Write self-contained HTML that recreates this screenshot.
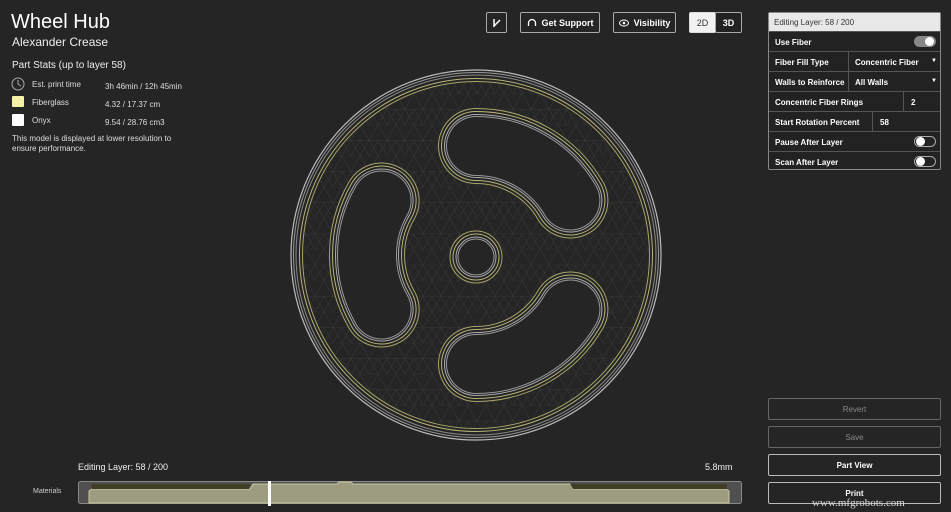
<!DOCTYPE html>
<html><head><meta charset="utf-8"><style>
*{margin:0;padding:0;box-sizing:border-box}
body{width:951px;height:512px;background:#252525;font-family:"Liberation Sans",sans-serif;color:#eee;position:relative;overflow:hidden}
.a{position:absolute}
.t{font-size:8px;color:#ddd}
.btn{position:absolute;border:1px solid #aaa;border-radius:2px;font-size:9px;color:#fff;display:flex;align-items:center;justify-content:center;font-weight:bold}
.panel{position:absolute;left:768px;top:12px;width:173px;height:158px;border:1px solid #888;border-radius:2px;background:#222}
.row{position:absolute;left:0;width:171px;height:20px;border-top:1px solid #555;font-size:8px;color:#fff;font-weight:bold}
.row span{position:absolute;top:6px}
.sep{position:absolute;top:0;width:1px;height:19px;background:#555}
.tog{position:absolute;right:4px;top:4px;width:22px;height:11px;border-radius:6px;border:1px solid #aaa}
.tog i{position:absolute;top:0;width:9px;height:9px;border-radius:50%;background:#fff}
.rb{position:absolute;left:768px;width:173px;height:22px;border:1px solid #777;border-radius:2px;font-size:8px;display:flex;align-items:center;justify-content:center}
</style></head><body>
<div class="a" style="left:11px;top:11px;font-size:20px;color:#fff">Wheel Hub</div>
<div class="a" style="left:12px;top:35px;font-size:12px;color:#eee">Alexander Crease</div>
<div class="a" style="left:12px;top:60px;font-size:10px;color:#eee">Part Stats (up to layer 58)</div>
<svg class="a" style="left:11px;top:77px" width="14" height="14"><circle cx="7" cy="7" r="6" fill="none" stroke="#aaa" stroke-width="1"/><path d="M7 3V7L10 9" fill="none" stroke="#aaa"/></svg>
<div class="a t" style="left:32px;top:80px">Est. print time</div><div class="a t" style="left:105px;top:82px">3h 46min / 12h 45min</div>
<div class="a" style="left:12px;top:96px;width:12px;height:11px;background:#f6f2a6;border-radius:1px"></div>
<div class="a t" style="left:32px;top:98px">Fiberglass</div><div class="a t" style="left:105px;top:100px">4.32 / 17.37 cm</div>
<div class="a" style="left:12px;top:114px;width:12px;height:12px;background:#fff;border-radius:1px"></div>
<div class="a t" style="left:32px;top:116px">Onyx</div><div class="a t" style="left:105px;top:118px">9.54 / 28.76 cm3</div>
<div class="a t" style="left:12px;top:134px;line-height:10px">This model is displayed at lower resolution to<br>ensure performance.</div>

<div class="btn" style="left:486px;top:12px;width:21px;height:21px"><svg width="10" height="10"><path d="M2 1V9M2 8L8 2" stroke="#fff" stroke-width="1.5" fill="none"/></svg></div>
<div class="btn" style="left:520px;top:12px;width:80px;height:21px"><svg width="10" height="10" style="margin-right:5px"><path d="M1.5 8V5A3.5 3.5 0 0 1 8.5 5V8" stroke="#fff" stroke-width="1.3" fill="none"/></svg>Get Support</div>
<div class="btn" style="left:613px;top:12px;width:63px;height:21px"><svg width="10" height="8" style="margin-right:5px"><ellipse cx="5" cy="4" rx="4.5" ry="3" fill="none" stroke="#fff"/><circle cx="5" cy="4" r="1.3" fill="#fff"/></svg>Visibility</div>
<div class="btn" style="left:689px;top:12px;width:27px;height:21px;background:#f2f2f2;color:#333;font-weight:normal;border-color:#ddd">2D</div>
<div class="btn" style="left:715px;top:12px;width:27px;height:21px;background:#222">3D</div>

<svg class="a" style="left:0;top:0" width="951" height="512">
<defs>
<pattern id="h" width="18" height="31.18" patternUnits="userSpaceOnUse">
<path d="M0 0H18M0 15.59H18M0 0L18 31.18M18 0L0 31.18M9 15.59L18 0M9 15.59L0 0M0 15.59L9 31.18M18 15.59L9 31.18" stroke="#363636" stroke-width="0.6" fill="none"/>
</pattern>
<g id="arc1"><path d="M381.6 200.5A109 109 0 0 0 381.6 309.5"/></g>
</defs>
<circle cx="476" cy="255" r="185" fill="none" stroke="#bbb" stroke-width="1.2"/>
<circle cx="476" cy="255" r="182.5" fill="none" stroke="#999" stroke-width="1"/>
<circle cx="476" cy="255" r="180" fill="none" stroke="#888" stroke-width="1"/>
<circle cx="476" cy="255" r="176.5" fill="none" stroke="#b9b47a" stroke-width="1"/>
<circle cx="476" cy="255" r="173.5" fill="url(#h)" stroke="#a9a46a" stroke-width="1"/>
<g fill="none" stroke-linecap="round">
<g id="s">
<path d="M381.6 200.5A109 109 0 0 0 381.6 309.5" stroke="#a9a46a" stroke-width="76"/>
<path d="M381.6 200.5A109 109 0 0 0 381.6 309.5" stroke="#252525" stroke-width="74"/>
<path d="M381.6 200.5A109 109 0 0 0 381.6 309.5" stroke="#b9b47a" stroke-width="70"/>
<path d="M381.6 200.5A109 109 0 0 0 381.6 309.5" stroke="#252525" stroke-width="68"/>
<path d="M381.6 200.5A109 109 0 0 0 381.6 309.5" stroke="#aaa" stroke-width="64"/>
<path d="M381.6 200.5A109 109 0 0 0 381.6 309.5" stroke="#252525" stroke-width="62"/>
<path d="M381.6 200.5A109 109 0 0 0 381.6 309.5" stroke="#999" stroke-width="60"/>
<path d="M381.6 200.5A109 109 0 0 0 381.6 309.5" stroke="#252525" stroke-width="58"/>
</g>
<use href="#s" transform="rotate(120 476 255)"/>
<use href="#s" transform="rotate(240 476 255)"/>
</g>
<circle cx="476" cy="257" r="26" fill="#252525" stroke="#a9a46a"/>
<circle cx="476" cy="257" r="23" fill="none" stroke="#b9b47a"/>
<circle cx="476" cy="257" r="20" fill="none" stroke="#aaa"/>
<circle cx="476" cy="257" r="18" fill="none" stroke="#999"/>
</svg>

<div class="panel">
<div style="position:absolute;left:0;top:0;width:171px;height:18px;background:#e8e8e8;font-size:8px;color:#333;padding:5px 0 0 5px">Editing Layer: 58 / 200</div>
<div class="row" style="top:18px"><span style="left:6px">Use Fiber</span><div class="tog" style="background:#888;border-color:#888"><i style="right:1px"></i></div></div>
<div class="row" style="top:38px"><span style="left:6px">Fiber Fill Type</span><div class="sep" style="left:79px"></div><span style="left:86px">Concentric Fiber</span><span style="left:162px;font-size:6px">▼</span></div>
<div class="row" style="top:58px"><span style="left:6px">Walls to Reinforce</span><div class="sep" style="left:79px"></div><span style="left:86px">All Walls</span><span style="left:162px;font-size:6px">▼</span></div>
<div class="row" style="top:78px"><span style="left:6px">Concentric Fiber Rings</span><div class="sep" style="left:134px"></div><span style="left:142px">2</span></div>
<div class="row" style="top:98px"><span style="left:6px">Start Rotation Percent</span><div class="sep" style="left:103px"></div><span style="left:111px">58</span></div>
<div class="row" style="top:118px"><span style="left:6px">Pause After Layer</span><div class="tog"><i style="left:1px"></i></div></div>
<div class="row" style="top:138px"><span style="left:6px">Scan After Layer</span><div class="tog"><i style="left:1px"></i></div></div>
</div>

<div class="rb" style="top:398px;color:#888;border-color:#666">Revert</div>
<div class="rb" style="top:426px;color:#888;border-color:#666">Save</div>
<div class="rb" style="top:454px;color:#fff;border-color:#bbb;font-weight:bold">Part View</div>
<div class="rb" style="top:482px;color:#fff;border-color:#bbb;font-weight:bold">Print</div>
<div class="a" style="left:812px;top:497px;font-size:11px;color:#ddd;font-family:'Liberation Serif',serif">www.mfgrobots.com</div>

<div class="a" style="left:78px;top:462px;font-size:9px;color:#eee">Editing Layer: 58 / 200</div>
<div class="a" style="left:705px;top:462px;font-size:9px;color:#eee">5.8mm</div>
<div class="a" style="left:33px;top:488px;font-size:7px;color:#ccc">Materials</div>
<svg class="a" style="left:78px;top:481px" width="665" height="25">
<rect x="0.5" y="0.5" width="663" height="22" fill="#505050" stroke="#888" rx="2"/>
<path d="M11 22V10L14 8H172L175 3H259L261 1H273L275 3H492L495 8H648L651 10V22Z" fill="#9e9c80" stroke="#c9c7a6"/>
<path d="M13 3H172L171 8L14 8Z" fill="#403d25"/>
<path d="M492 3H649V8H495Z" fill="#403d25"/>
<rect x="190" y="0" width="3" height="25" fill="#fff"/>
</svg>
</body></html>
